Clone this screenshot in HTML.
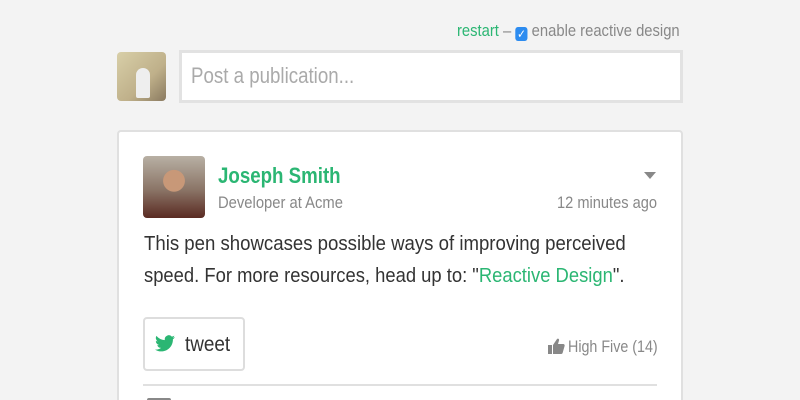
<!DOCTYPE html>
<html><head><meta charset="utf-8"><style>
html,body{margin:0;width:800px;height:400px;overflow:hidden}
body{background:#f3f3f3;font-family:"Liberation Sans",sans-serif;position:relative}
.a{position:absolute;white-space:nowrap;transform-origin:left top}
.g{color:#2bb673}
</style></head><body>
<div class="a" style="left:457px;top:21px;font-size:17px;color:#888;transform:scaleX(.87)"><span class="g">restart</span> – <span style="display:inline-block;width:14px;height:14px;background:#2d8cf0;border-radius:3px;vertical-align:-2px;color:#fff;font-size:12px;line-height:14px;text-align:center">✓</span> enable reactive design</div>
<div style="position:absolute;left:117px;top:52px;width:49px;height:49px;border-radius:4px;background:linear-gradient(135deg,#d8cfa8,#bfb08a 60%,#8a7a60)"></div>
<div style="position:absolute;left:136px;top:68px;width:14px;height:30px;background:#eee;border-radius:7px 7px 2px 2px"></div>
<div style="position:absolute;left:170px;top:68px;width:0;height:0;border:9px solid transparent;border-right-color:#e0e0e0"></div>
<div style="position:absolute;left:179px;top:50px;width:498px;height:47px;background:#fff;border:3px solid #e2e2e2"></div>
<div class="a" style="left:191px;top:63px;font-size:22px;color:#aaa;transform:scaleX(.85)">Post a publication...</div>
<div style="position:absolute;left:117px;top:130px;width:562px;height:268px;background:#fff;border:2px solid #e0e0e0;border-bottom:none;border-radius:4px 4px 0 0"></div>
<div style="position:absolute;left:143px;top:156px;width:62px;height:62px;border-radius:4px;background:radial-gradient(circle at 50% 40%,#c89878 0 22%,transparent 23%),linear-gradient(#b8b0a4,#8a7466 55%,#5a2a22)"></div>
<div class="a g" style="left:218px;top:163px;font-size:22px;font-weight:bold;transform:scaleX(.85)">Joseph Smith</div>
<div class="a" style="left:218px;top:193px;font-size:17px;color:#888;transform:scaleX(.87)">Developer at Acme</div>
<div style="position:absolute;left:644px;top:172px;border:6px solid transparent;border-top:7px solid #888;border-bottom:0"></div>
<div class="a" style="left:557px;top:193px;font-size:17px;color:#888;transform:scaleX(.86)">12 minutes ago</div>
<div class="a" style="left:144px;top:233px;font-size:20px;color:#333;transform:scaleX(.93)">This pen showcases possible ways of improving perceived</div>
<div class="a" style="left:144px;top:265px;font-size:20px;color:#333;transform:scaleX(.92)">speed. For more resources, head up to: "<span class="g">Reactive Design</span>".</div>
<div style="position:absolute;left:143px;top:317px;width:98px;height:50px;border:2px solid #ddd;border-radius:4px;background:#fff"></div>
<svg style="position:absolute;left:155px;top:335px" width="20" height="17" viewBox="0 0 24 20"><path fill="#2bb673" d="M24 2.4a10 10 0 0 1-2.8.8A5 5 0 0 0 23.3.5a10 10 0 0 1-3.1 1.2A4.9 4.9 0 0 0 11.8 6 14 14 0 0 1 1.7.9a4.9 4.9 0 0 0 1.5 6.6 4.9 4.9 0 0 1-2.2-.6 4.9 4.9 0 0 0 3.900 4.9 4.9 4.9 0 0 1-2.2.1 4.9 4.9 0 0 0 4.6 3.4A9.9 9.9 0 0 1 0 17.3 14 14 0 0 0 7.5 19.5c9 0 14-7.5 14-14v-.6A10 10 0 0 0 24 2.4z"/></svg>
<div class="a" style="left:185px;top:333px;font-size:21px;color:#333;transform:scaleX(.9)">tweet</div>
<svg style="position:absolute;left:548px;top:338px" width="17" height="16" viewBox="0 0 17 16"><rect x="0" y="7" width="4" height="9" fill="#888"/><path fill="#888" d="M5 7l4-6c1-1 2.5 0 2 1.5L10 6h5c1.2 0 2 1 1.6 2l-2 7c-.3.7-1 1-1.6 1H5z"/></svg>
<div class="a" style="left:568px;top:337px;font-size:17px;color:#888;transform:scaleX(.84)">High Five (14)</div>
<div style="position:absolute;left:143px;top:384px;width:514px;height:2px;background:#e0e0e0"></div>
<div style="position:absolute;left:147px;top:398px;width:24px;height:2px;background:#888;border-radius:2px 2px 0 0"></div>
</body></html>
